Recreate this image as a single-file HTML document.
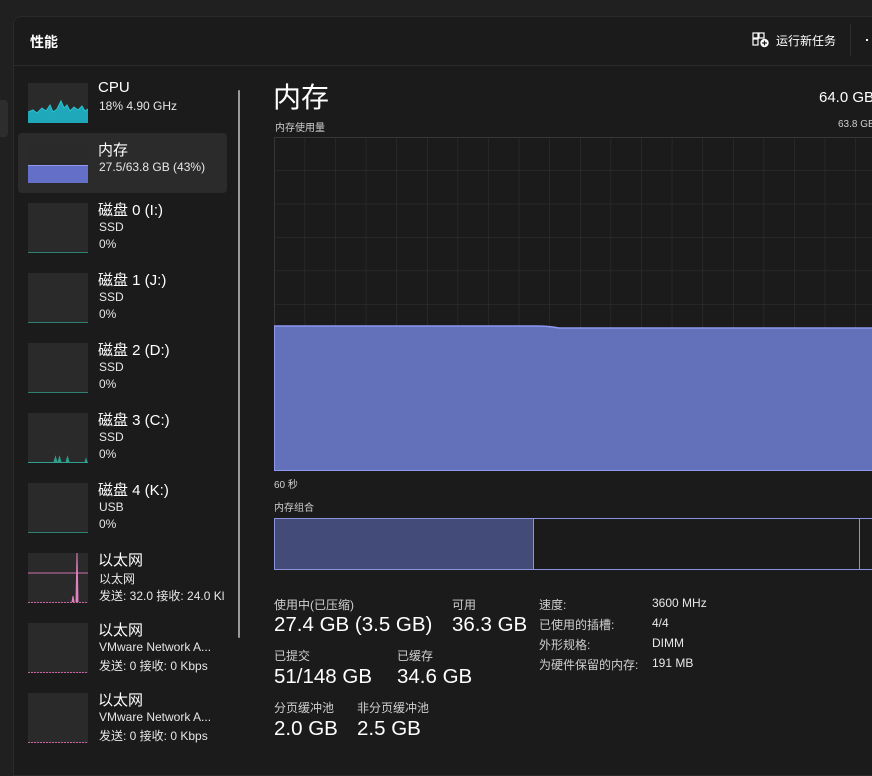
<!DOCTYPE html>
<html><head><meta charset="utf-8"><style>
*{margin:0;padding:0;box-sizing:border-box}
body{width:872px;height:759px;background:#202020;overflow:hidden;position:relative;font-family:"Segoe UI","Liberation Sans","Noto Sans CJK SC",sans-serif;color:#fff}
.a{position:absolute;white-space:nowrap}
#win{position:absolute;left:13px;top:16px;width:870px;height:760px;background:#1b1b1b;border-top-left-radius:8px;border:1px solid #2a2a2a}
.th{position:absolute;left:28px;width:60px;height:50px;background:#2a2a2a;border-bottom:1px solid #2f7f73}
.t1{font-size:15px;color:#fff}
.t2{font-size:12px;color:#e6e6e6}
.lbl{font-size:12px;color:#cfcfcf}
.val{font-size:20.5px;color:#fff}
</style></head><body>
<div class="a" style="left:0;top:100px;width:8px;height:37px;background:#2d2d2d;border-radius:0 4px 4px 0"></div>
<div id="win"></div>
<div class="a" style="left:30px;top:32px;font-size:14px;font-weight:bold">性能</div>
<div class="a" style="left:14px;top:65px;width:858px;height:1px;background:#2c2c2c"></div>
<svg class="a" style="left:752px;top:32px" width="18" height="16" viewBox="0 0 18 16"><rect x="1" y="1" width="5" height="5" fill="none" stroke="#fff" stroke-width="1.2"/><rect x="7" y="1" width="5" height="5" fill="none" stroke="#fff" stroke-width="1.2"/><rect x="1" y="7" width="5" height="6" fill="none" stroke="#fff" stroke-width="1.2"/><circle cx="12.5" cy="11" r="4.2" fill="#fff"/><path d="M12.5 8.6v4.8M10.1 11h4.8" stroke="#1b1b1b" stroke-width="1.2"/></svg>
<div class="a" style="left:776px;top:32px;font-size:12px">运行新任务</div>
<div class="a" style="left:850px;top:24px;width:1px;height:32px;background:#2e2e2e"></div>
<div class="a" style="left:866px;top:39px;width:2px;height:2px;background:#fff"></div>

<div class="a" style="left:18px;top:133px;width:209px;height:60px;background:#2b2b2b;border-radius:4px"></div>
<div class="a" style="left:238px;top:90px;width:2px;height:548px;background:#9a9a9a;border-radius:1px"></div>

<svg class="a" style="left:28px;top:83px" width="60" height="40"><rect width="60" height="40" fill="#2a2a2a"/><path d="M0 40V29L5 27L9 30L14 25L18 28L22 22L25 29L29 26L33 18L36 25L39 22L42 28L46 24L50 27L54 23L57 28L60 26V40Z" fill="#1fa8ba"/><path d="M0 29L5 27L9 30L14 25L18 28L22 22L25 29L29 26L33 18L36 25L39 22L42 28L46 24L50 27L54 23L57 28L60 26" fill="none" stroke="#27c4d4"/></svg>
<div class="a t1" style="left:98px;top:79px">CPU</div>
<div class="a t2" style="left:99px;top:99px">18% 4.90 GHz</div>

<svg class="a" style="left:28px;top:143px" width="60" height="40"><rect width="60" height="40" fill="#2a2a2a"/><rect x="0" y="22" width="60" height="18" fill="#6470c8"/><path d="M0 22.5H60" stroke="#8e98f0"/></svg>
<div class="a t1" style="left:98px;top:139px">内存</div>
<div class="a t2" style="left:99px;top:160px">27.5/63.8 GB (43%)</div>

<div class="th" style="top:203px"></div>
<div class="a t1" style="left:98px;top:199px">磁盘 0 (I:)</div>
<div class="a t2" style="left:99px;top:220px">SSD</div>
<div class="a t2" style="left:99px;top:237px">0%</div>

<div class="th" style="top:273px"></div>
<div class="a t1" style="left:98px;top:269px">磁盘 1 (J:)</div>
<div class="a t2" style="left:99px;top:290px">SSD</div>
<div class="a t2" style="left:99px;top:307px">0%</div>

<div class="th" style="top:343px"></div>
<div class="a t1" style="left:98px;top:339px">磁盘 2 (D:)</div>
<div class="a t2" style="left:99px;top:360px">SSD</div>
<div class="a t2" style="left:99px;top:377px">0%</div>

<svg class="a" style="left:28px;top:413px" width="60" height="50"><rect width="60" height="50" fill="#2a2a2a"/><path d="M0 49.5H60M26 49L27.5 44L29 49M30 49L31.5 44L33 49M38 49L39.5 44L41 49M57 49L58 46L59 49" fill="#2f9f8f" stroke="#2f9f8f"/></svg>
<div class="a t1" style="left:98px;top:409px">磁盘 3 (C:)</div>
<div class="a t2" style="left:99px;top:430px">SSD</div>
<div class="a t2" style="left:99px;top:447px">0%</div>

<div class="th" style="top:483px"></div>
<div class="a t1" style="left:98px;top:479px">磁盘 4 (K:)</div>
<div class="a t2" style="left:99px;top:500px">USB</div>
<div class="a t2" style="left:99px;top:517px">0%</div>

<svg class="a" style="left:28px;top:553px" width="60" height="50"><rect width="60" height="50" fill="#2a2a2a"/><path d="M0 49.5H60" stroke="#c8649f" stroke-dasharray="2 1"/><path d="M0 20H60" stroke="#d070b0"/><path d="M44 49L45 43L46 49M48 49L49 0L50 49" fill="#e080c0" stroke="#e080c0"/></svg>
<div class="a t1" style="left:98px;top:549px">以太网</div>
<div class="a t2" style="left:99px;top:570px">以太网</div>
<div class="a t2" style="left:99px;top:587px">发送: 32.0 接收: 24.0 Kl</div>

<svg class="a" style="left:28px;top:623px" width="60" height="50"><rect width="60" height="50" fill="#2a2a2a"/><path d="M0 49.5H60" stroke="#c8649f" stroke-dasharray="2 1"/></svg>
<div class="a t1" style="left:98px;top:619px">以太网</div>
<div class="a t2" style="left:99px;top:640px">VMware Network A...</div>
<div class="a t2" style="left:99px;top:657px">发送: 0 接收: 0 Kbps</div>

<svg class="a" style="left:28px;top:693px" width="60" height="50"><rect width="60" height="50" fill="#2a2a2a"/><path d="M0 49.5H60" stroke="#c8649f" stroke-dasharray="2 1"/></svg>
<div class="a t1" style="left:98px;top:689px">以太网</div>
<div class="a t2" style="left:99px;top:710px">VMware Network A...</div>
<div class="a t2" style="left:99px;top:727px">发送: 0 接收: 0 Kbps</div>

<div class="a" style="left:273px;top:76px;font-size:28px">内存</div>
<div class="a" style="left:275px;top:119px;font-size:10px;color:#cfcfcf">内存使用量</div>
<div class="a" style="left:819px;top:89px;font-size:15px">64.0 GB</div>
<div class="a" style="left:838px;top:119px;font-size:10px;color:#cfcfcf">63.8 GB</div>

<svg class="a" style="left:274px;top:137px" width="598" height="335">
<defs><pattern id="g" x="0" y="0" width="30.6" height="33.4" patternUnits="userSpaceOnUse"><path d="M0 0V33.4M0 0H30.6" fill="none" stroke="#333" stroke-width="1"/></pattern></defs>
<rect x="0" y="0" width="598" height="334" fill="url(#g)"/>
<rect x="0.5" y="0.5" width="598" height="333" fill="none" stroke="#363636"/>
<path d="M0 189H262Q275 189 285 191H598V334H0Z" fill="#6370ba"/>
<path d="M0 189H262Q275 189 285 191H598" fill="none" stroke="#8e98f0" stroke-width="1.5"/>
<path d="M0.5 189V334" stroke="#8e98f0"/>
<path d="M0 333.5H598" stroke="#8e98f0"/>
</svg>
<div class="a" style="left:274px;top:476px;font-size:10px;color:#cfcfcf">60 秒</div>
<div class="a" style="left:274px;top:499px;font-size:10px;color:#cfcfcf">内存组合</div>

<div class="a" style="left:274px;top:518px;width:610px;height:52px;border:1px solid #8a93e0;background:#1b1b1b"></div>
<div class="a" style="left:275px;top:519px;width:259px;height:50px;background:#434b78;border-right:1px solid #8a93e0"></div>
<div class="a" style="left:859px;top:519px;width:1px;height:50px;background:#8a93e0"></div>

<div class="a lbl" style="left:274px;top:596px">使用中(已压缩)</div>
<div class="a val" style="left:274px;top:613px">27.4 GB (3.5 GB)</div>
<div class="a lbl" style="left:452px;top:596px">可用</div>
<div class="a val" style="left:452px;top:613px">36.3 GB</div>
<div class="a lbl" style="left:274px;top:647px">已提交</div>
<div class="a val" style="left:274px;top:665px">51/148 GB</div>
<div class="a lbl" style="left:397px;top:647px">已缓存</div>
<div class="a val" style="left:397px;top:665px">34.6 GB</div>
<div class="a lbl" style="left:274px;top:699px">分页缓冲池</div>
<div class="a val" style="left:274px;top:717px">2.0 GB</div>
<div class="a lbl" style="left:357px;top:699px">非分页缓冲池</div>
<div class="a val" style="left:357px;top:717px">2.5 GB</div>

<div class="a lbl" style="left:539px;top:596px">速度:</div>
<div class="a lbl" style="left:652px;top:596px;color:#e8e8e8">3600 MHz</div>
<div class="a lbl" style="left:539px;top:616px">已使用的插槽:</div>
<div class="a lbl" style="left:652px;top:616px;color:#e8e8e8">4/4</div>
<div class="a lbl" style="left:539px;top:636px">外形规格:</div>
<div class="a lbl" style="left:652px;top:636px;color:#e8e8e8">DIMM</div>
<div class="a lbl" style="left:539px;top:656px">为硬件保留的内存:</div>
<div class="a lbl" style="left:652px;top:656px;color:#e8e8e8">191 MB</div>
</body></html>
